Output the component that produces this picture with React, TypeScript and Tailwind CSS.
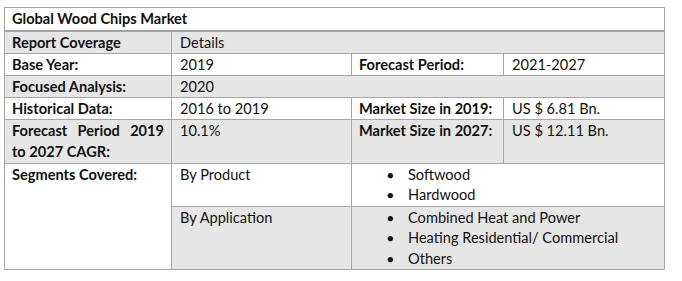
const grey = "bg-[#e7e6e6]";
const cell = "border border-[#a6a6a6] px-[7px] align-top";

function Bullets({ items }: { items: string[] }) {
  return (
    <ul className="pl-[28px]">
      {items.map((it) => (
        <li key={it} className="flex leading-[20.5px]">
          <span className="w-[21px] shrink-0 text-[11px]">●</span>
          <span>{it}</span>
        </li>
      ))}
    </ul>
  );
}

export default function App() {
  return (
    <div className="w-[682px] h-[281px] bg-white pt-[7px] pl-[4px] font-['Lato','Liberation_Sans',sans-serif] text-[14.6px] leading-[21px] text-[#111]">
      <table className="border-collapse table-fixed w-[660px]">
        <colgroup>
          <col className="w-[167px]" />
          <col className="w-[180px]" />
          <col className="w-[152px]" />
          <col className="w-[161px]" />
        </colgroup>
        <tbody>
          <tr className="h-[23px]">
            <td colSpan={4} className={`${cell} border-b-2 font-bold`}>
              Global Wood Chips Market
            </td>
          </tr>
          <tr className={`h-[22px] ${grey}`}>
            <td className={`${cell} font-bold`}>Report Coverage</td>
            <td colSpan={3} className={`${cell} pl-[8px]`}>Details</td>
          </tr>
          <tr className="h-[22px]">
            <td className={`${cell} font-bold`}>Base Year:</td>
            <td className={`${cell} pl-[8px]`}>2019</td>
            <td className={`${cell} font-bold`}>Forecast Period:</td>
            <td className={`${cell} pl-[8px]`}>2021-2027</td>
          </tr>
          <tr className={`h-[22px] ${grey}`}>
            <td className={`${cell} font-bold`}>Focused Analysis:</td>
            <td colSpan={3} className={`${cell} pl-[8px]`}>2020</td>
          </tr>
          <tr className="h-[21px]">
            <td className={`${cell} font-bold`}>Historical Data:</td>
            <td className={`${cell} pl-[8px]`}>2016 to 2019</td>
            <td className={`${cell} font-bold`}>Market Size in 2019:</td>
            <td className={`${cell} pl-[8px]`}>US $ 6.81 Bn.</td>
          </tr>
          <tr className={`h-[44px] ${grey}`}>
            <td className={`${cell} font-bold text-justify`}>
              Forecast Period 2019 to 2027 CAGR:
            </td>
            <td className={`${cell} pl-[8px]`}>10.1%</td>
            <td className={`${cell} font-bold`}>Market Size in 2027:</td>
            <td className={`${cell} pl-[8px]`}>US $ 12.11 Bn.</td>
          </tr>
          <tr className="h-[41px]">
            <td rowSpan={2} className={`${cell} font-bold`}>Segments Covered:</td>
            <td className={`${cell} pl-[8px]`}>By Product</td>
            <td colSpan={2} className={`${cell} pt-[1px]`}>
              <Bullets items={["Softwood", "Hardwood"]} />
            </td>
          </tr>
          <tr className={`h-[62px] ${grey}`}>
            <td className={`${cell} pl-[8px]`}>By Application</td>
            <td colSpan={2} className={`${cell} pt-[1px]`}>
              <Bullets
                items={[
                  "Combined Heat and Power",
                  "Heating Residential/ Commercial",
                  "Others",
                ]}
              />
            </td>
          </tr>
        </tbody>
      </table>
    </div>
  );
}
